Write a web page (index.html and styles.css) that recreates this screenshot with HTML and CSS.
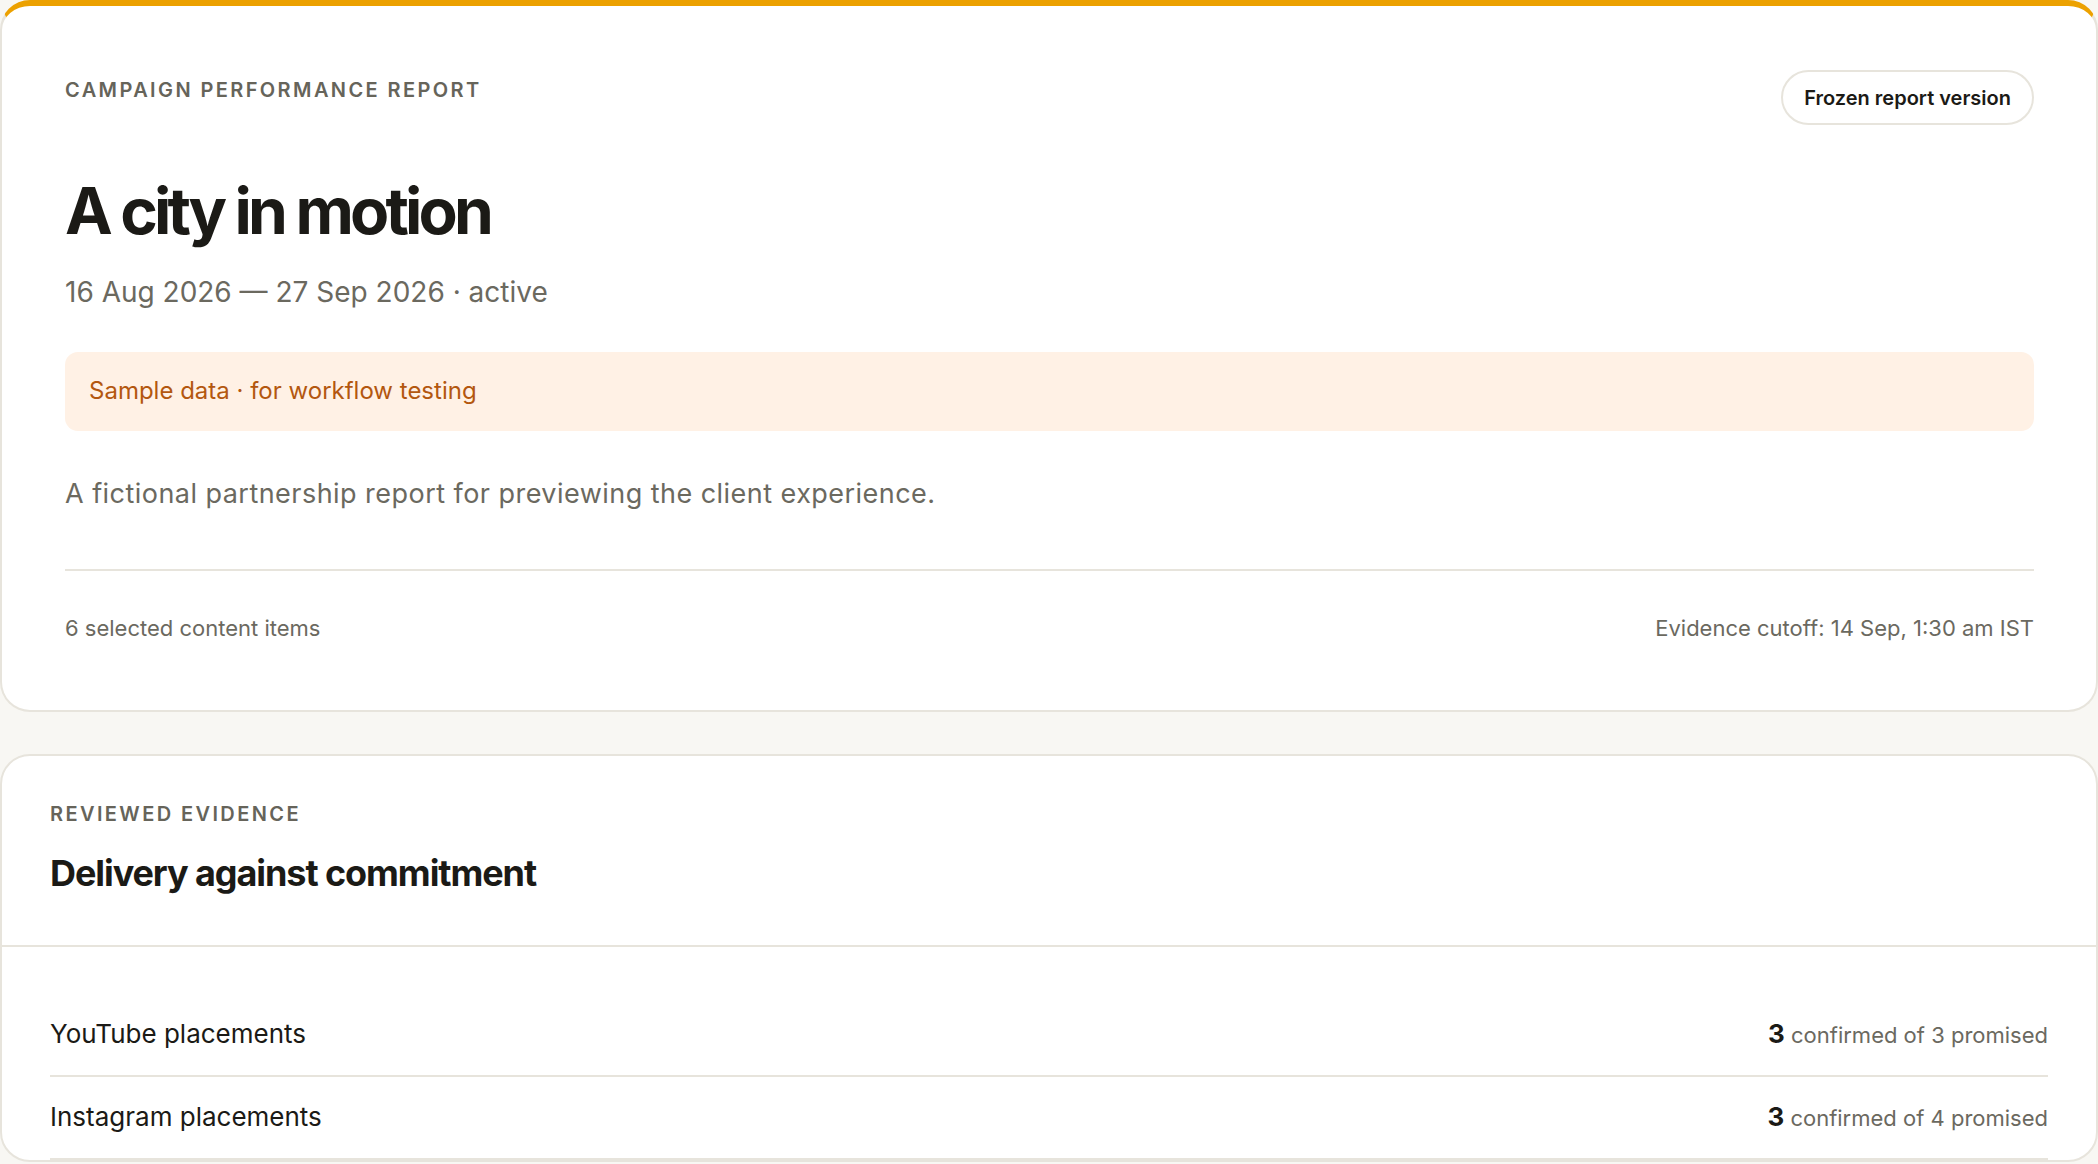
FILE: index.html
```html
<!DOCTYPE html>
<html lang="en">
<head>
<meta charset="utf-8">
<title>A city in motion — Campaign performance report</title>
<link rel="stylesheet" href="styles.css">
</head>
<body>
<main class="page">
  <section class="card hero">
    <header class="hero-head">
      <div class="eyebrow hero-eyebrow">Campaign performance report</div>
      <span class="pill">Frozen report version</span>
    </header>
    <h1 class="title">A city in motion</h1>
    <p class="dates">16 Aug 2026 — 27 Sep 2026 · active</p>
    <div class="notice">Sample data · for workflow testing</div>
    <p class="desc">A fictional partnership report for previewing the client experience.</p>
    <footer class="hero-foot">
      <span>6 selected content items</span>
      <span>Evidence cutoff: 14 Sep, 1:30 am IST</span>
    </footer>
  </section>

  <section class="card evidence">
    <header class="evidence-head">
      <div class="eyebrow">Reviewed evidence</div>
      <h2 class="section-title">Delivery against commitment</h2>
    </header>
    <ul class="rows">
      <li class="row">
        <span class="row-label">YouTube placements</span>
        <span class="row-value"><strong>3</strong> confirmed of 3 promised</span>
      </li>
      <li class="row">
        <span class="row-label">Instagram placements</span>
        <span class="row-value"><strong>3</strong> confirmed of 4 promised</span>
      </li>
    </ul>
  </section>
</main>
</body>
</html>
```

FILE: styles.css
```css
* { box-sizing: border-box; }

html, body {
  margin: 0;
  padding: 0;
}

body {
  background: #f8f7f3;
  font-family: Inter, "Noto Sans", "Liberation Sans", sans-serif;
  color: #1b1a16;
  -webkit-font-smoothing: antialiased;
}

.page {
  display: flex;
  flex-direction: column;
  gap: 42px;
}

.card {
  background: #ffffff;
  border: 2px solid #e7e4dc;
  border-radius: 30px;
}

/* ---------- hero card ---------- */
.hero {
  border-top: 6px solid #eca100;
  padding: 64px 62px 66px 63px;
}

.hero-head {
  display: flex;
  justify-content: space-between;
  align-items: flex-start;
}

.eyebrow {
  font-size: 20px;
  line-height: 28px;
  font-weight: 600;
  letter-spacing: 0.12em;
  text-transform: uppercase;
  color: #66645a;
}

.hero-eyebrow {
  margin-top: 6px;
}

.pill {
  display: inline-flex;
  align-items: center;
  height: 55px;
  padding: 0 21px;
  border: 2px solid #e7e4dc;
  border-radius: 999px;
  font-size: 20px;
  font-weight: 600;
  color: #1b1a16;
}

.title {
  margin: 51px 0 0;
  font-size: 64px;
  line-height: 1.1;
  font-weight: 700;
  letter-spacing: -0.06em;
  color: #1b1a16;
}

.dates {
  margin: 27px 0 0;
  font-size: 28px;
  line-height: 1.4;
  color: #6b695f;
}

.notice {
  margin-top: 39px;
  padding: 23px 24px 24px;
  background: #fff1e5;
  border-radius: 13px;
  font-size: 24px;
  line-height: 1.35;
  color: #b3570f;
}

.desc {
  margin: 43px 0 0;
  font-size: 27px;
  line-height: 1.5;
  letter-spacing: 0.017em;
  color: #6b695f;
}

.hero-foot {
  margin-top: 55px;
  padding-top: 42px;
  border-top: 2px solid #e7e4dc;
  display: flex;
  justify-content: space-between;
  font-size: 22px;
  line-height: 1.4;
  color: #6b695f;
}

/* ---------- evidence card ---------- */
.evidence-head {
  padding: 44px 48px 50px;
  border-bottom: 2px solid #e7e4dc;
}

.section-title {
  margin: 24px 0 0;
  font-size: 36px;
  line-height: 1.2;
  font-weight: 700;
  letter-spacing: -0.03em;
  color: #1b1a16;
}

.rows {
  list-style: none;
  margin: 0;
  padding: 47px 48px 0 48px;
}

.row {
  display: flex;
  justify-content: space-between;
  align-items: baseline;
  padding: 22px 0;
  border-bottom: 2px solid #e7e4dc;
  line-height: 35px;
}

.row-label {
  font-size: 26px;
  color: #1b1a16;
}

.row-value {
  font-size: 22px;
  color: #6b695f;
}

.row-value strong {
  font-size: 26px;
  font-weight: 700;
  color: #1b1a16;
}
```
